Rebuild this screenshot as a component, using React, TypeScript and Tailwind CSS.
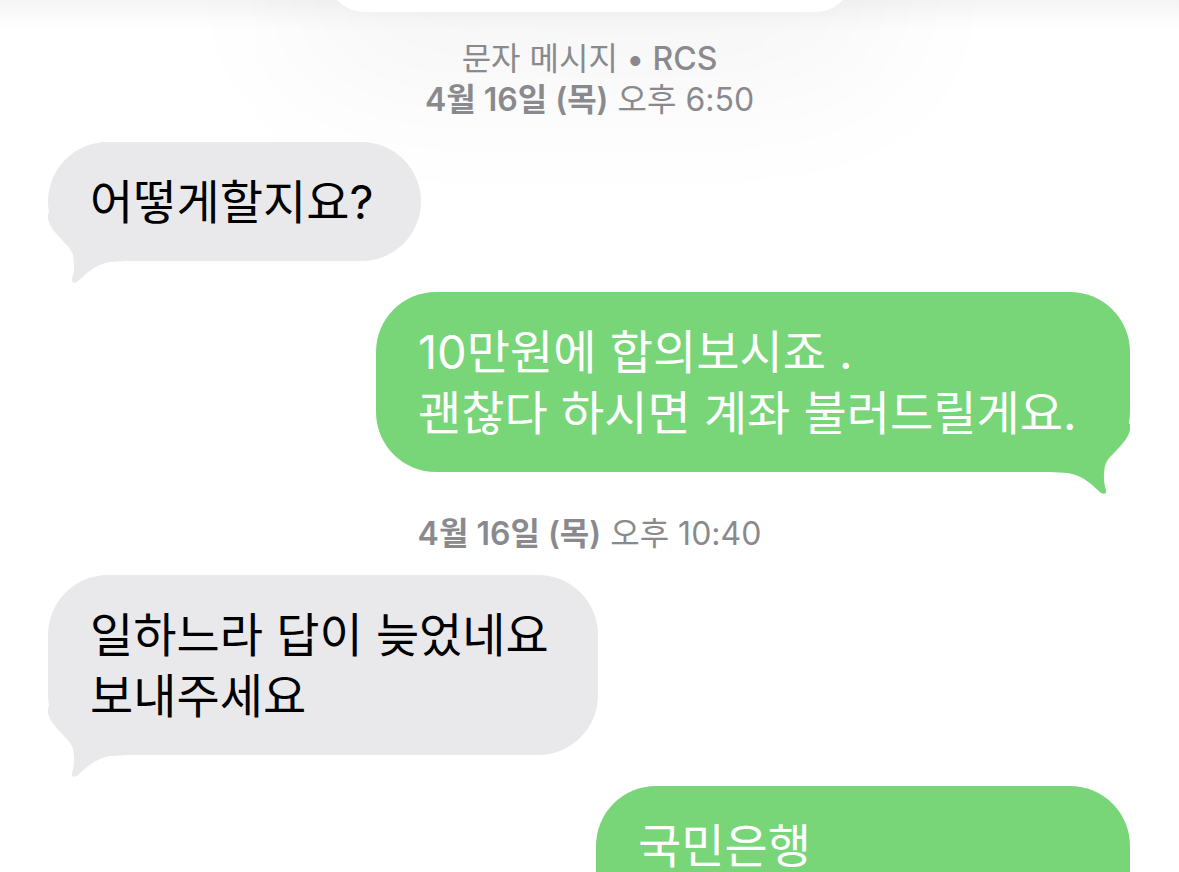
import React from 'react';

const font = { fontFamily: '"Inter", "Noto Sans CJK KR", sans-serif' };

function Tail({ side, color }: { side: 'left' | 'right'; color: string }) {
  return (
    <svg
      width="80"
      height="70"
      viewBox="0 0 80 70"
      className={`absolute bottom-[-22px] ${side === 'left' ? 'left-0' : 'right-0 -scale-x-100'}`}
    >
      <path
        d="M0 0 L0 6 C4 22 22 30 25 42 C27 52 26 60 24 66 C23 69 26 71 29 69 C36 63 45 52 62 49 L80 48 L80 0 Z"
        fill={color}
      />
    </svg>
  );
}

function Bubble({
  side,
  width,
  children,
  tail = true,
}: {
  side: 'left' | 'right';
  width: string;
  children: React.ReactNode;
  tail?: boolean;
}) {
  const incoming = side === 'left';
  return (
    <div className={`flex ${incoming ? 'justify-start pl-[48px]' : 'justify-end pr-[49px]'}`}>
      <div className={`relative ${width}`}>
        {tail && <Tail side={side} color={incoming ? '#e9e9eb' : '#78d679'} />}
        <div
          className={`relative rounded-[60px] pl-[42px] pr-[30px] py-[29px] text-[47px] leading-[61px] whitespace-nowrap ${
            incoming ? 'bg-[#e9e9eb] text-black' : 'bg-[#78d679] text-white'
          }`}
        >
          {children}
        </div>
      </div>
    </div>
  );
}

function Stamp({ day, time }: { day: string; time: string }) {
  return (
    <div className="text-center text-[32px] leading-[41px] text-[#8a8a8e]">
      <span className="font-semibold">{day}</span> {time}
    </div>
  );
}

export default function App() {
  return (
    <div
      className="h-[872px] w-full overflow-hidden bg-[linear-gradient(to_bottom,#f4f4f4_0px,#fbfbfb_18px,#ffffff_30px)]"
      style={font}
    >
      {/* top sheet with soft glow */}
      <div className="mx-auto -mt-[60px] h-[72px] w-[524px] rounded-[40px] bg-white shadow-[0_20px_160px_40px_rgba(0,0,0,0.05)]" />

      <div className="mt-[26px]">
        <div className="text-center text-[32px] leading-[41px] text-[#8a8a8e]">
          문자 메시지 <span className="font-medium">• RCS</span>
        </div>
        <Stamp day="4월 16일 (목)" time="오후 6:50" />
      </div>

      <div className="mt-[22px]">
        <Bubble side="left" width="w-[373px]">
          어떻게할지요?
        </Bubble>
      </div>

      <div className="mt-[31px]">
        <Bubble side="right" width="w-[754px]">
          10만원에 합의보시죠 .
          <br />
          괜찮다 하시면 계좌 불러드릴게요.
        </Bubble>
      </div>

      <div className="mt-[41px]">
        <Stamp day="4월 16일 (목)" time="오후 10:40" />
      </div>

      <div className="mt-[21px]">
        <Bubble side="left" width="w-[550px]">
          일하느라 답이 늦었네요
          <br />
          보내주세요
        </Bubble>
      </div>

      <div className="mt-[31px]">
        <Bubble side="right" width="w-[534px]" tail={false}>
          국민은행
          <br />
          &nbsp;
        </Bubble>
      </div>
    </div>
  );
}
